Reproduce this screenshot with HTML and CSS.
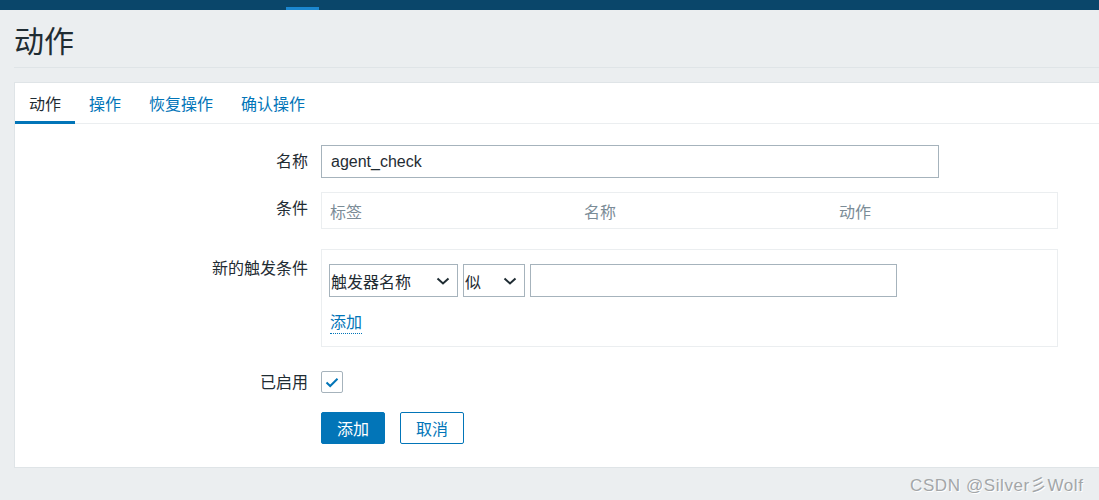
FILE: index.html
```html
<!DOCTYPE html>
<html lang="zh-CN">
<head>
    <meta charset="UTF-8">
    <meta name="viewport" content="width=device-width, initial-scale=1.0">
    <title>动作</title>
    <link rel="stylesheet" href="styles.css">
</head>
<body>

<div class="top-nav">
    <span class="top-nav-active"></span>
</div>

<div class="wrapper">
    <div class="page-header">
        <h1>动作</h1>
    </div>

    <div class="panel">
        <ul class="tabs">
            <li class="tab active">动作</li>
            <li class="tab">操作</li>
            <li class="tab">恢复操作</li>
            <li class="tab">确认操作</li>
        </ul>

        <div class="form-list">
            <div class="form-row row-name">
                <label class="form-label">名称</label>
                <div class="form-field">
                    <input class="text-input name-input" type="text" value="agent_check">
                </div>
            </div>

            <div class="form-row row-conditions">
                <label class="form-label">条件</label>
                <div class="form-field">
                    <div class="cond-table">
                        <span>标签</span>
                        <span>名称</span>
                        <span>动作</span>
                    </div>
                </div>
            </div>

            <div class="form-row row-new">
                <label class="form-label label-new">新的触发条件</label>
                <div class="form-field">
                    <div class="new-box">
                        <div class="new-line">
                            <div class="select select-type">
                                <span>触发器名称</span>
                                <svg class="chevron" width="14" height="8" viewBox="0 0 14 8"><path d="M1.5 1.5 L7 6.5 L12.5 1.5" fill="none" stroke="#1f2c33" stroke-width="2"/></svg>
                            </div>
                            <div class="select select-op">
                                <span>似</span>
                                <svg class="chevron" width="14" height="8" viewBox="0 0 14 8"><path d="M1.5 1.5 L7 6.5 L12.5 1.5" fill="none" stroke="#1f2c33" stroke-width="2"/></svg>
                            </div>
                            <input class="text-input value-input" type="text">
                        </div>
                        <a class="link-add">添加</a>
                    </div>
                </div>
            </div>

            <div class="form-row row-enabled">
                <label class="form-label">已启用</label>
                <div class="form-field">
                    <span class="checkbox">
                        <svg width="14" height="11" viewBox="0 0 14 11"><path d="M1.5 5.5 L5.2 9 L12.5 1.8" fill="none" stroke="#0275b8" stroke-width="2"/></svg>
                    </span>
                </div>
            </div>

            <div class="form-row row-buttons">
                <span></span>
                <div class="form-field buttons">
                    <button class="btn btn-primary">添加</button>
                    <button class="btn btn-alt">取消</button>
                </div>
            </div>
        </div>
    </div>
</div>

<div class="watermark">CSDN @Silver彡Wolf</div>

</body>
</html>
```

FILE: styles.css
```css
* {
    margin: 0;
    padding: 0;
    box-sizing: border-box;
    font-family: "Liberation Sans", "Noto Sans CJK SC", sans-serif;
}
body {
    background: #ebeef0;
    color: #1f2c33;
    font-size: 16px;
    overflow: hidden;
    height: 500px;
    position: relative;
}
.top-nav {
    height: 10px;
    background: #0a466a;
    position: relative;
}
.top-nav-active {
    position: absolute;
    left: 286px;
    bottom: 0;
    width: 33px;
    height: 3px;
    background: #1b87d0;
}
.wrapper {
    padding-left: 14px;
    margin-right: -4px;
}
.page-header {
    padding-top: 12px;
    padding-bottom: 5px;
    border-bottom: 1px solid #dfe4e7;
    margin-bottom: 14px;
}
.page-header h1 {
    font-size: 30px;
    font-weight: normal;
    line-height: 40px;
    color: #1f2c33;
}
.panel {
    background: #fff;
    border: 1px solid #dfe4e7;
    height: 386px;
}

/* tabs */
.tabs {
    list-style: none;
    display: flex;
    border-bottom: 1px solid #ebeef0;
}
.tab {
    padding: 5px 14px 0;
    line-height: 33px;
    border-bottom: 3px solid transparent;
    margin-bottom: -1px;
    color: #0275b8;
    font-size: 16px;
}
.tab.active {
    color: #1f2c33;
    border-bottom-color: #0275b8;
}

/* form */
.form-list {
    padding-top: 21px;
}
.form-row {
    display: grid;
    grid-template-columns: 293px 1fr;
    column-gap: 13px;
    align-items: start;
}
.form-label {
    text-align: right;
    line-height: 33px;
    font-size: 16px;
}
.row-name {
    margin-bottom: 14px;
}
.row-conditions {
    margin-bottom: 20px;
}
.row-new {
    margin-bottom: 24px;
}
.label-new {
    padding-top: 3px;
}
.row-enabled {
    margin-bottom: 19px;
}
.row-enabled .form-label {
    line-height: 21px;
    padding-top: 1px;
}
.text-input {
    height: 33px;
    border: 1px solid #a6b3bc;
    padding: 0 9px;
    font-size: 16px;
    color: #1f2c33;
    background: #fff;
    outline: none;
}
.name-input {
    width: 618px;
}
.cond-table {
    width: 737px;
    height: 37px;
    border: 1px solid #ebeef0;
    display: grid;
    grid-template-columns: 254px 255px 1fr;
    align-items: center;
    padding-left: 8px;
    padding-top: 1px;
    color: #7b8c97;
}
.new-box {
    width: 737px;
    height: 98px;
    border: 1px solid #ebeef0;
    padding: 14px 7px 0;
}
.new-line {
    display: flex;
    gap: 5px;
}
.select {
    height: 33px;
    border: 1px solid #a6b3bc;
    display: flex;
    align-items: center;
    justify-content: space-between;
    padding: 0 7px 0 1px;
    font-size: 16px;
}
.select-type {
    width: 129px;
}
.select-op {
    width: 62px;
}
.value-input {
    width: 367px;
    height: 33px;
}
.link-add {
    display: inline-block;
    margin-top: 16px;
    margin-left: 1px;
    color: #0275b8;
    line-height: 20px;
    border-bottom: 1px dotted #0275b8;
    cursor: pointer;
}
.checkbox {
    display: flex;
    align-items: center;
    justify-content: center;
    width: 22px;
    height: 22px;
    border: 1px solid #a6b3bc;
    border-radius: 2px;
    background: #fff;
}
.buttons {
    display: flex;
    gap: 15px;
}
.btn {
    width: 64px;
    height: 32px;
    font-size: 16px;
    border-radius: 2px;
    border: 1px solid #0275b8;
    cursor: pointer;
}
.btn-primary {
    background: #0275b8;
    color: #fff;
}
.btn-alt {
    background: #fff;
    color: #0275b8;
}

.watermark {
    position: absolute;
    left: 910px;
    top: 471px;
    font-size: 17px;
    color: #a3a6a8;
    text-shadow: 1px 1px 0 #fff;
    letter-spacing: 0.6px;
}
```
